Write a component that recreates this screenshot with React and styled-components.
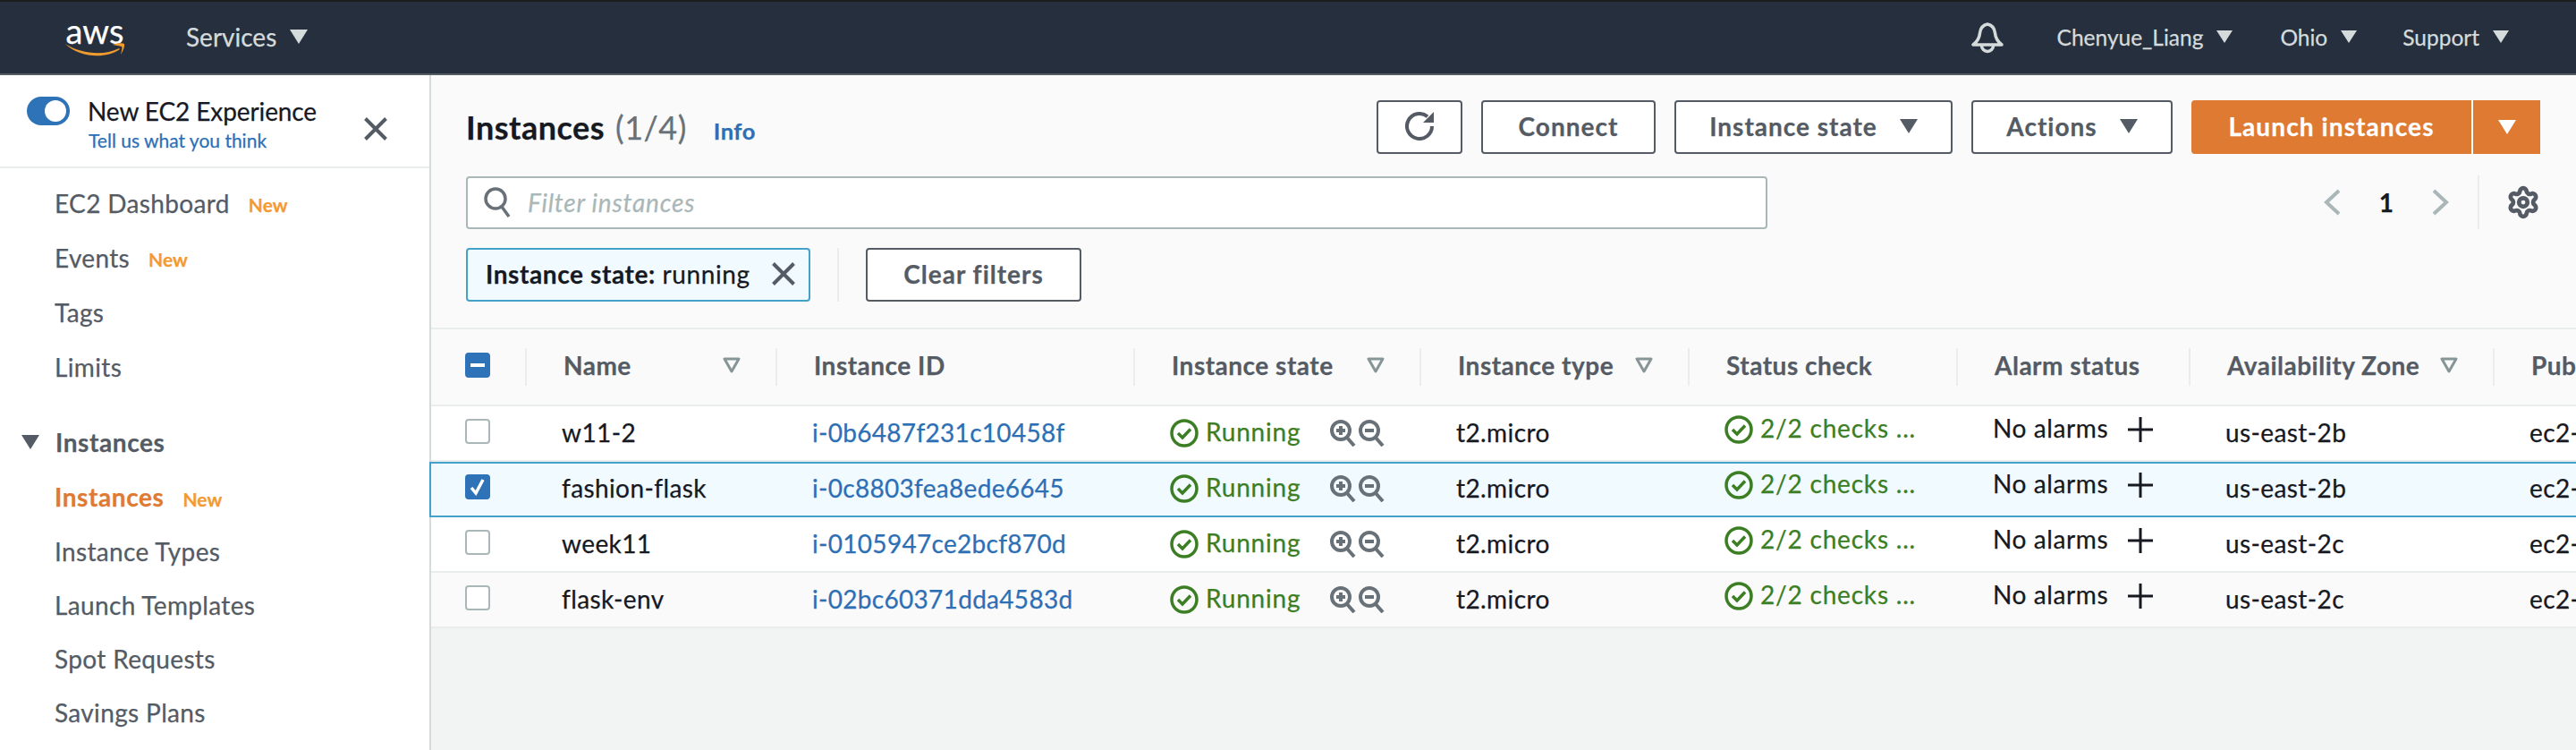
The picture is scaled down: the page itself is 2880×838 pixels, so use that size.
import styled, { createGlobalStyle } from "styled-components";
import { Settings } from "lucide-react";

const GlobalStyle = createGlobalStyle`
  html, body {
    margin: 0;
    height: 100%;
    font-family: "Lato", "Liberation Sans", sans-serif;
    color: #16191f;
    -webkit-text-stroke: 0.25px;
  }
  #root { height: 100%; }
  * { box-sizing: border-box; }
`;

const COLUMNS = "107px 280px 400px 320px 300px 300px 260px 340px 1fr";

const Page = styled.div`
  display: flex;
  flex-direction: column;
  height: 100%;
  overflow: hidden;
  white-space: nowrap;
`;

const TopBar = styled.header`
  display: flex;
  align-items: center;
  flex: none;
  height: 84px;
  padding: 0 75px 0 73px;
  background: #262f3e;
  border-top: 2px solid #1c1c1e;
  border-bottom: 2px solid #545b64;
  color: #d5dbdb;
`;

const Logo = styled.div`
  display: flex;
  flex-direction: column;
  align-items: center;
  width: 66px;
  margin-right: 69px;
  color: #fff;
  font-size: 38px;
  line-height: 26px;
  svg { display: block; margin-top: 1px; }
`;

const NavLabel = styled.span`
  display: flex;
  align-items: center;
  gap: ${p => p.$gap || 15}px;
  padding-bottom: 2px;
  font-size: ${p => p.$size || 24.5}px;
  margin-left: ${p => p.$left || 0}px;
`;

const Caret = styled.span`
  display: inline-block;
  width: 0;
  height: 0;
  border-left: ${p => (p.$w || 20) / 2}px solid transparent;
  border-right: ${p => (p.$w || 20) / 2}px solid transparent;
  border-top: ${p => p.$h || 16}px solid ${p => p.$color || "#d5dbdb"};
`;

const Spacer = styled.div`
  flex: 1;
`;

const Body = styled.div`
  display: flex;
  flex: 1;
  min-height: 0;
`;

const Sidebar = styled.aside`
  flex: none;
  width: 482px;
  background: #fff;
  border-right: 2px solid #d5dbdb;
  color: #545b64;
`;

const SideHead = styled.div`
  display: flex;
  align-items: flex-start;
  height: 104px;
  padding: 22px 47px 0 30px;
  border-bottom: 2px solid #eaeded;
`;

const Toggle = styled.span`
  display: flex;
  justify-content: flex-end;
  align-items: center;
  flex: none;
  width: 48px;
  height: 32px;
  margin: 2px 20px 0 0;
  padding-right: 4px;
  border-radius: 16px;
  background: #2e73b8;
  &::after {
    content: "";
    width: 24px;
    height: 24px;
    border-radius: 50%;
    background: #fff;
  }
`;

const SideTitle = styled.div`
  flex: 1;
  color: #16191f;
  font-size: 28px;
  letter-spacing: -0.1px;
  line-height: 36px;
  a {
    display: block;
    margin-left: 1px;
    color: #2d6fb5;
    font-size: 21px;
    letter-spacing: 0;
    line-height: 30px;
  }
`;

const CloseIcon = styled.svg`
  flex: none;
  margin-top: 25px;
`;

const NavList = styled.nav`
  padding: ${p => p.$top}px 0 0 61px;
  font-size: 28px;
  letter-spacing: 0.35px;
`;

const NavItem = styled.div`
  display: flex;
  align-items: center;
  gap: 21px;
  height: ${p => p.$h}px;
  color: ${p => (p.$active ? "#df7a33" : "#545b64")};
  font-weight: ${p => (p.$active ? 700 : 400)};
  letter-spacing: ${p => (p.$active ? 0.6 : 0.35)}px;
  span {
    padding-top: 4px;
    color: #f39a32;
    font-size: 21px;
    font-weight: 700;
    letter-spacing: 0;
  }
`;

const NavSection = styled.div`
  display: flex;
  align-items: center;
  gap: 18px;
  height: 61px;
  margin-left: -37px;
  font-weight: 700;
  letter-spacing: 0.6px;
`;

const Main = styled.main`
  flex: 1;
  min-width: 0;
  background: #f2f3f3;
`;

const Controls = styled.section`
  height: 284px;
  padding: 28px 40px 0 39px;
  background: #fafafa;
  border-bottom: 2px solid #eaeded;
`;

const Row = styled.div`
  display: flex;
  align-items: center;
  gap: ${p => p.$gap || 0}px;
  margin-top: ${p => p.$top || 0}px;
`;

const Title = styled.h1`
  display: flex;
  align-items: baseline;
  flex: 1;
  margin: 0;
  font-size: 36px;
  font-weight: 700;
  letter-spacing: 0.5px;
  span {
    margin-left: 12px;
    color: #687078;
    font-weight: 400;
  }
  a {
    margin-left: 30px;
    color: #2d6fb5;
    font-size: 25.5px;
  }
`;

const Button = styled.button`
  display: flex;
  align-items: center;
  justify-content: center;
  gap: 25px;
  flex: none;
  width: ${p => p.$w}px;
  height: 60px;
  padding: 0 0 2px;
  background: #fff;
  border: 2px solid #545b64;
  border-radius: 4px;
  color: #545b64;
  font-family: inherit;
  font-size: 28px;
  font-weight: 700;
  letter-spacing: 1px;
`;

const LaunchGroup = styled.div`
  display: flex;
  flex: none;
  width: 390px;
  height: 60px;
  background: #df7a33;
  border-radius: 4px 0 0 4px;
  color: #fff;
  font-size: 28px;
  font-weight: 700;
  letter-spacing: 1.1px;
`;

const LaunchLabel = styled.div`
  display: flex;
  align-items: center;
  justify-content: center;
  width: 315px;
  padding-bottom: 2px;
  border-right: 2px solid #fff;
`;

const LaunchCaret = styled.div`
  display: flex;
  align-items: center;
  justify-content: center;
  flex: 1;
`;

const FilterBox = styled.div`
  display: flex;
  align-items: center;
  gap: 19px;
  flex: none;
  width: 1455px;
  height: 59px;
  padding-left: 18px;
  background: #fff;
  border: 2px solid #aab7b8;
  border-radius: 4px;
  color: #aab7b8;
  font-size: 28px;
  font-style: italic;
  letter-spacing: 0.8px;
`;

const Pager = styled.div`
  display: flex;
  align-items: center;
  margin-left: auto;
  padding-right: 3px;
  font-size: 28px;
  font-weight: 700;
`;

const PageNumber = styled.span`
  margin: 0 43px;
`;

const PagerRule = styled.span`
  width: 2px;
  height: 60px;
  margin: 0 33px 0 32px;
  background: #eaeded;
`;

const SettingsIcon = styled(Settings)`
  margin: -3px;
  color: #545b64;
`;

const Chip = styled.div`
  display: flex;
  align-items: center;
  justify-content: space-between;
  flex: none;
  width: 385px;
  height: 60px;
  padding: 0 15px 2px 20px;
  background: #f1faff;
  border: 2px solid #44a2c8;
  border-radius: 4px;
  font-size: 28px;
  letter-spacing: 0.6px;
  b { font-weight: 700; }
`;

const ChipRule = styled.span`
  width: 2px;
  height: 60px;
  background: #eaeded;
`;

const HeadRow = styled.div`
  display: grid;
  grid-template-columns: ${COLUMNS};
  align-items: center;
  height: 86px;
  background: #fafafa;
  border-bottom: 2px solid #eaeded;
`;

const HeadCell = styled.div`
  display: flex;
  align-items: center;
  justify-content: space-between;
  height: 42px;
  padding: 0 39px 4px ${p => p.$pad || 41}px;
  color: #545b64;
  font-size: 28px;
  font-weight: 700;
  letter-spacing: 0.5px;
  border-right: ${p => (p.$last ? "none" : "2px solid #eaeded")};
`;

const SortIcon = styled.svg`
  flex: none;
`;

const TableRow = styled.div`
  display: grid;
  grid-template-columns: ${COLUMNS};
  align-items: center;
  height: 62px;
  background: ${p => (p.$selected ? "#f1faff" : p.$stripe ? "#fafafa" : "#fff")};
  box-shadow: ${p => (p.$selected
    ? "inset 0 2px 0 #44a2c8, inset 0 -2px 0 #44a2c8, -2px 0 0 #44a2c8"
    : "inset 0 -2px 0 #eaeded")};
  &:first-of-type { box-shadow: none; }
`;

const Cell = styled.div`
  display: flex;
  align-items: center;
  min-width: 0;
  padding-left: ${p => p.$pad || 39}px;
  padding-bottom: ${p => p.$lift || 0}px;
  font-size: 28px;
`;

const CellText = styled.span`
  padding-bottom: 4px;
  color: ${p => p.$color || "#16191f"};
  letter-spacing: ${p => p.$track || 0.4}px;
`;

const CheckBox = styled.span`
  display: flex;
  align-items: center;
  justify-content: center;
  width: 28px;
  height: 28px;
  background: ${p => (p.$on ? "#2e73b8" : "#fff")};
  border: 2px solid ${p => (p.$on ? "#2e73b8" : "#aab7b8")};
  border-radius: 4px;
`;

const StateLabel = styled(CellText)`
  margin-left: 8px;
`;

const ZoomPair = styled.span`
  display: flex;
  gap: 3px;
  margin-left: ${p => p.$left}px;
`;

const AddIcon = styled.svg`
  flex: none;
  margin-left: 22px;
`;

const rows = [
  { name: "w11-2", id: "i-0b6487f231c10458f", zone: "us-east-2b" },
  { name: "fashion-flask", id: "i-0c8803fea8ede6645", zone: "us-east-2b", selected: true },
  { name: "week11", id: "i-0105947ce2bcf870d", zone: "us-east-2c" },
  { name: "flask-env", id: "i-02bc60371dda4583d", zone: "us-east-2c", stripe: true },
];

const Smile = () => (
  <svg width="66" height="16" viewBox="0 0 66 16" fill="#f09b2f">
    <path d="M0 1C17 12 43 15 60 6L61 7C45 18 17 17 0 1Z" />
    <path d="M53 2C57 0 64 0 66 1C67 3 64 10 62 13C63 9 64 5 63 4C61 3 56 3 53 2Z" />
  </svg>
);

const Bell = () => (
  <svg width="36" height="36" viewBox="0 0 36 36" fill="none" stroke="#d5dbdb" strokeWidth="3.500" strokeLinejoin="round">
    <path d="M18 3C12 4 10 9 9.500 13C9 19 6 23 2 26H34C30 23 27 19 26.500 13C26 9 24 4 18 3Z" />
    <path d="M11.500 27A6.500 6.500 0 0 0 24.500 27" />
  </svg>
);

const Close = ({ size = 26, ...rest }) => (
  <svg width={size} height={size} viewBox="0 0 26 26" stroke="#545b64" strokeWidth="4" {...rest}>
    <path d="M1.500 1.500L24.500 24.500M24.500 1.500L1.500 24.500" />
  </svg>
);

const Refresh = () => (
  <svg width="32" height="32" viewBox="0 0 32 32" fill="none" stroke="#545b64" strokeWidth="4">
    <path d="M25 5.300A14 14 0 1 0 30 16" />
    <path d="M32 0V12H20Z" fill="#545b64" stroke="none" />
  </svg>
);

const Search = () => (
  <svg width="30" height="36" viewBox="0 0 30 36" fill="none" stroke="#687078" strokeWidth="3.500">
    <circle cx="13" cy="14" r="11" />
    <path d="M20 23L28 34" />
  </svg>
);

const Chevron = ({ right }) => (
  <svg width="19" height="30" viewBox="0 0 19 30" fill="none" stroke="#aab7b8" strokeWidth="4">
    <path d={right ? "M2 2L16 15L2 28" : "M17 2L3 15L17 28"} />
  </svg>
);

const SortDown = () => (
  <SortIcon width="20" height="18" viewBox="0 0 20 18" fill="none" stroke="#879596" strokeWidth="3" strokeLinejoin="round">
    <path d="M2 2H18L10 16Z" />
  </SortIcon>
);

const Okay = () => (
  <svg width="32" height="32" viewBox="0 0 32 32" fill="none" stroke="#3c7e23" strokeWidth="3.500">
    <circle cx="16" cy="16" r="14" />
    <path d="M9 16L14 21L23 11.500" />
  </svg>
);

const Magnifier = ({ plus }) => (
  <svg width="29" height="30" viewBox="0 0 29 30" fill="none" stroke="#687078" strokeWidth="4">
    <circle cx="12" cy="12" r="10" />
    <path d="M19 20L27 29" />
    <path d={plus ? "M7 12H17M12 7V17" : "M7 12H17"} />
  </svg>
);

const App = () => {
  return (
    <Page>
      <GlobalStyle />
      <TopBar>
        <Logo>
          aws
          <Smile />
        </Logo>
        <NavLabel $size={28}>Services<Caret /></NavLabel>
        <Spacer />
        <Bell />
        <NavLabel $left={60}>Chenyue_Liang<Caret $w={19} $h={14} /></NavLabel>
        <NavLabel $left={53}>Ohio<Caret $w={19} $h={14} /></NavLabel>
        <NavLabel $left={51}>Support<Caret $w={19} $h={14} /></NavLabel>
      </TopBar>
      <Body>
        <Sidebar>
          <SideHead>
            <Toggle />
            <SideTitle>
              New EC2 Experience
              <a>Tell us what you think</a>
            </SideTitle>
            <CloseIcon as={Close} />
          </SideHead>
          <NavList $top={8}>
            <NavItem $h={61}>EC2 Dashboard<span>New</span></NavItem>
            <NavItem $h={61}>Events<span>New</span></NavItem>
            <NavItem $h={61}>Tags</NavItem>
            <NavItem $h={61}>Limits</NavItem>
          </NavList>
          <NavList $top={23}>
            <NavSection><Caret $color="#545b64" />Instances</NavSection>
            <NavItem $h={62} $active>Instances<span>New</span></NavItem>
            <NavItem $h={60}>Instance Types</NavItem>
            <NavItem $h={60}>Launch Templates</NavItem>
            <NavItem $h={60}>Spot Requests</NavItem>
            <NavItem $h={60}>Savings Plans</NavItem>
          </NavList>
        </Sidebar>
        <Main>
          <Controls>
            <Row $gap={21}>
              <Title>
                Instances<span>(1/4)</span><a>Info</a>
              </Title>
              <Button $w={96}><Refresh /></Button>
              <Button $w={195}>Connect</Button>
              <Button $w={311}>Instance state<Caret $w={21} $h={16} $color="#545b64" /></Button>
              <Button $w={225}>Actions<Caret $w={21} $h={16} $color="#545b64" /></Button>
              <LaunchGroup>
                <LaunchLabel>Launch instances</LaunchLabel>
                <LaunchCaret><Caret $w={21} $h={16} $color="#fff" /></LaunchCaret>
              </LaunchGroup>
            </Row>
            <Row $top={24}>
              <FilterBox><Search />Filter instances</FilterBox>
              <Pager>
                <Chevron />
                <PageNumber>1</PageNumber>
                <Chevron right />
                <PagerRule />
                <SettingsIcon size={38} strokeWidth={3} />
              </Pager>
            </Row>
            <Row $top={21} $gap={30}>
              <Chip>
                <span><b>Instance state:</b> running</span>
                <Close />
              </Chip>
              <ChipRule />
              <Button $w={241}>Clear filters</Button>
            </Row>
          </Controls>
          <HeadRow>
            <HeadCell $pad={38}>
              <CheckBox $on>
                <svg width="16" height="4" viewBox="0 0 16 4"><rect width="16" height="4" fill="#fff" /></svg>
              </CheckBox>
            </HeadCell>
            <HeadCell>Name<SortDown /></HeadCell>
            <HeadCell>Instance ID</HeadCell>
            <HeadCell>Instance state<SortDown /></HeadCell>
            <HeadCell>Instance type<SortDown /></HeadCell>
            <HeadCell>Status check</HeadCell>
            <HeadCell>Alarm status</HeadCell>
            <HeadCell>Availability Zone<SortDown /></HeadCell>
            <HeadCell $last>Public IPv4 DNS</HeadCell>
          </HeadRow>
          {rows.map(row => (
            <TableRow key={row.id} $selected={row.selected} $stripe={row.stripe}>
              <Cell $pad={38} $lift={6}>
                <CheckBox $on={row.selected}>
                  {row.selected && (
                    <svg width="18" height="20" viewBox="0 0 18 20" fill="none" stroke="#fff" strokeWidth="3.500">
                      <path d="M2 11L7 17L15 2" />
                    </svg>
                  )}
                </CheckBox>
              </Cell>
              <Cell><CellText>{row.name}</CellText></Cell>
              <Cell><CellText $color="#2d6fb5" $track={0.3}>{row.id}</CellText></Cell>
              <Cell $lift={2}>
                <Okay />
                <StateLabel $color="#3c7e23" $track={0.8}>Running</StateLabel>
                <ZoomPair $left={33}>
                  <Magnifier plus />
                  <Magnifier />
                </ZoomPair>
              </Cell>
              <Cell><CellText>t2.micro</CellText></Cell>
              <Cell $lift={10}>
                <Okay />
                <StateLabel $color="#3c7e23" $track={0.8}>2/2 checks ...</StateLabel>
              </Cell>
              <Cell $lift={10}>
                <CellText $track={0.6}>No alarms</CellText>
                <AddIcon width="28" height="28" viewBox="0 0 28 28" stroke="#16191f" strokeWidth="3">
                  <path d="M14 0V28M0 14H28" />
                </AddIcon>
              </Cell>
              <Cell><CellText>{row.zone}</CellText></Cell>
              <Cell><CellText>ec2-</CellText></Cell>
            </TableRow>
          ))}
        </Main>
      </Body>
    </Page>
  );
};

export default App;
